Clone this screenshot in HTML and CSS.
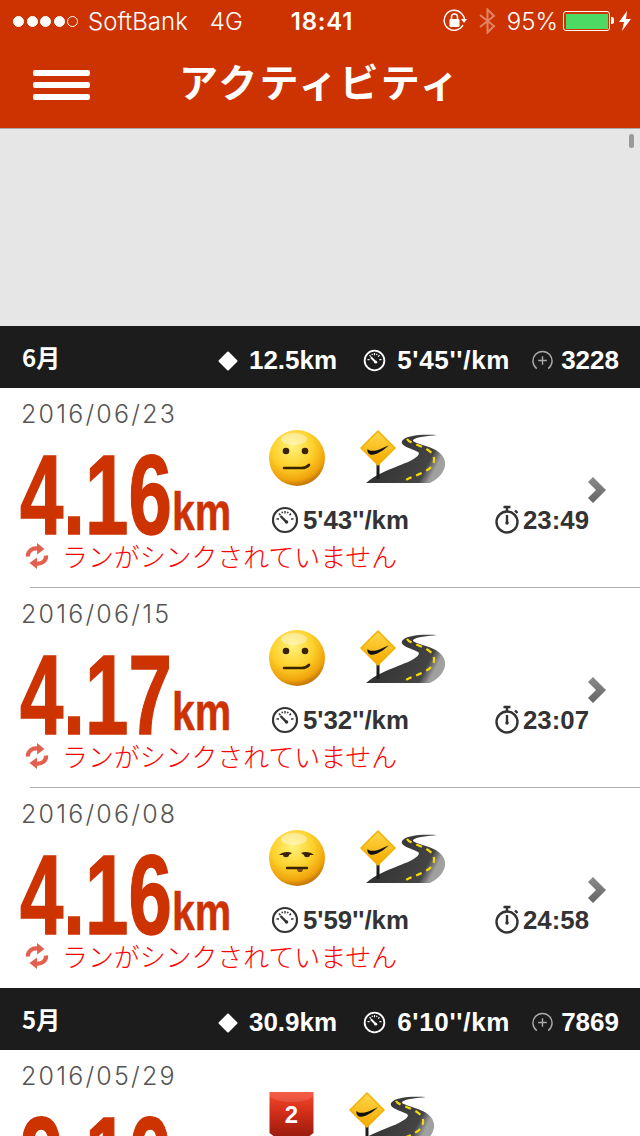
FILE: index.html
```html
<!DOCTYPE html>
<html lang="ja">
<head>
    <meta charset="UTF-8">
    <meta name="viewport" content="width=device-width, initial-scale=1.0">
    <title>アクティビティ</title>
    <link rel="stylesheet" href="styles.css">
</head>
<body>
    <!-- shared icons -->
    <svg class="defs" width="0" height="0" aria-hidden="true">
        <defs>
            <radialGradient id="faceFill" cx="42%" cy="30%" r="75%">
                <stop offset="0" stop-color="#fff27a"/>
                <stop offset="0.5" stop-color="#fcd02a"/>
                <stop offset="0.8" stop-color="#f0a30c"/>
                <stop offset="1" stop-color="#a85f04"/>
            </radialGradient>
            <linearGradient id="roadFill" x1="0" y1="0" x2="1" y2="0.3">
                <stop offset="0" stop-color="#2a2a2a"/>
                <stop offset="0.88" stop-color="#444"/>
                <stop offset="1" stop-color="#a0a0a0"/>
            </linearGradient>
            <linearGradient id="signFill" x1="0" y1="0" x2="0" y2="1">
                <stop offset="0" stop-color="#ffd84a"/>
                <stop offset="1" stop-color="#f5a800"/>
            </linearGradient>
            <linearGradient id="badgeFill" x1="0" y1="0" x2="0" y2="1">
                <stop offset="0" stop-color="#f5482c"/>
                <stop offset="0.5" stop-color="#cf2c18"/>
                <stop offset="1" stop-color="#9c1c0e"/>
            </linearGradient>
            <linearGradient id="chevFill" x1="0" y1="0" x2="0" y2="1">
                <stop offset="0" stop-color="#8a8a8a"/>
                <stop offset="1" stop-color="#666"/>
            </linearGradient>

            <symbol id="road" viewBox="0 0 90 56">
                <path d="M77 5C62 4 46 5 42 11C40 16 50 18 58 22C62 25 52 31 38 36C25 41 14 46 6 53L70 53C80 48 86 40 85 32C84 24 76 19 66 16C60 14 52 12 53 10C56 7 68 6 77 5Z" fill="url(#roadFill)"/>
                <path d="M47 9C49 13 60 15 68 20C76 25 76 33 69 39C61 44 51 47 42 52" fill="none" stroke="#f5d90a" stroke-width="2.200" stroke-dasharray="6 5"/>
                <rect x="16.500" y="32" width="3" height="17" fill="#1c1c1c"/>
                <path d="M18 1L35 18L18 35L1 18Z" fill="url(#signFill)" stroke="#f2b000" stroke-width="1.500" stroke-linejoin="round"/>
                <path d="M7.500 19C11 23 20 20 29 15C23 21 15 26 10 24.500C8 23.500 7 21.500 7.500 19Z" fill="#111"/>
            </symbol>

            <symbol id="gauge" viewBox="0 0 28 28">
                <circle cx="14" cy="14" r="12" fill="none" stroke="currentColor" stroke-width="2.200"/>
                <path d="M14 5v2.500M8 7.500l1.500 1.800M20 7.500l-1.500 1.800M5.500 13h2.500M20 13h2.500M11 5.800l.5 1.500M17 5.800l-.5 1.500" stroke="currentColor" stroke-width="1.400" fill="none"/>
                <path d="M9.500 10l5.800 5.800" stroke="currentColor" stroke-width="2.400"/>
                <circle cx="15.500" cy="16" r="1.800" fill="currentColor"/>
            </symbol>

            <symbol id="watch" viewBox="0 0 26 30">
                <circle cx="12" cy="17" r="10.500" fill="none" stroke="#333" stroke-width="2.400"/>
                <path d="M8.500 2h7M12 2v4M20 5.500l2.500 2.500" stroke="#333" stroke-width="2.400" fill="none"/>
                <path d="M12 10v8" stroke="#333" stroke-width="2.400"/>
                <circle cx="12" cy="18" r="1.800" fill="#333"/>
            </symbol>

            <symbol id="sync" viewBox="0 0 24 26">
                <path d="M3 13.500C2.500 8.500 7 4.500 13 5.500" fill="none" stroke="#e2604f" stroke-width="4.200"/>
                <path d="M12 0L19.500 6L12 11.500Z" fill="#e2604f"/>
                <path d="M21 12.500C21.500 17.500 17 21.500 11 20.500" fill="none" stroke="#e2604f" stroke-width="4.200"/>
                <path d="M12 14.500L4.500 20L12 26Z" fill="#e2604f"/>
            </symbol>

            <symbol id="chev" viewBox="0 0 18 26">
                <path d="M0 5L5 0L18 13L5 26L0 21L8 13Z" fill="url(#chevFill)"/>
            </symbol>

            <symbol id="faceFlat" viewBox="0 0 56 56">
                <circle cx="28" cy="28" r="28" fill="url(#faceFill)"/>
                <ellipse cx="25" cy="9" rx="13" ry="6" fill="#fff" opacity="0.4"/>
                <circle cx="17" cy="21" r="3.300" fill="#3a2205"/>
                <circle cx="36" cy="21" r="3.300" fill="#3a2205"/>
                <path d="M15 38H33C36 38 38 37 40 35" fill="none" stroke="#3a2205" stroke-width="2.600" stroke-linecap="round"/>
            </symbol>

            <symbol id="faceTired" viewBox="0 0 56 56">
                <circle cx="28" cy="28" r="28" fill="url(#faceFill)"/>
                <ellipse cx="25" cy="9" rx="13" ry="6" fill="#fff" opacity="0.4"/>
                <path d="M10 25C13 22 19 21 23 23L20 25C20 28 14 28 14 25Z" fill="#3a2205"/>
                <path d="M32 23C36 21 42 22 45 25L41 25C41 28 35 28 35 25Z" fill="#3a2205"/>
                <path d="M18 38H38" fill="none" stroke="#3a2205" stroke-width="2.400" stroke-linecap="round"/>
                <path d="M28 39H34C34 41.500 32.500 42 31 42C29.500 42 28 41.500 28 39Z" fill="#7a4a12"/>
            </symbol>

            <symbol id="badge" viewBox="0 0 44 44">
                <path d="M0 0H44V41L40 44H4L0 41Z" fill="url(#badgeFill)"/>
                <path d="M0 0H44V4C36 12 8 12 0 4Z" fill="#fff" opacity="0.12"/>
            </symbol>
        </defs>
    </svg>

    <header class="app-header">
        <div class="status-bar">
            <div class="status-left">
                <span class="signal">
                    <i></i><i></i><i></i><i></i><i class="off"></i>
                </span>
                <span class="carrier">SoftBank</span>
                <span class="network">4G</span>
            </div>
            <div class="status-time">18:41</div>
            <div class="status-right">
                <svg class="lock-icon" width="24" height="24" viewBox="0 0 24 24">
                    <path d="M20 16A10 10 0 1 1 18.500 4.500A10 10 0 0 1 21.500 10" fill="none" stroke="#fff" stroke-width="1.400"/>
                    <path d="M18 10H24L21 14Z" fill="#fff"/>
                    <rect x="6.500" y="10" width="10" height="8" rx="1" fill="#fff"/>
                    <path d="M8.500 10V8A3 3 0 0 1 14.500 8V10" fill="none" stroke="#fff" stroke-width="1.500"/>
                </svg>
                <svg class="bt-icon" width="17" height="26" viewBox="0 0 17 26">
                    <path d="M1 7L15 18L8.500 24.500V1.500L15 8L1 19" fill="none" stroke="#fff" stroke-opacity="0.4" stroke-width="2"/>
                </svg>
                <span class="battery-pct">95%</span>
                <span class="battery"><span class="battery-level"></span></span>
                <svg class="bolt-icon" width="12" height="20" viewBox="0 0 12 20">
                    <path d="M8 0L0 11H5L3 20L12 8H7Z" fill="#fff"/>
                </svg>
            </div>
        </div>
        <nav class="nav-bar">
            <div class="menu-btn"><span></span><span></span><span></span></div>
            <h1>アクティビティ</h1>
            <div></div>
        </nav>
    </header>

    <div class="ad-area"><div class="scroll-thumb"></div></div>

    <section class="month-bar">
        <div class="month-name">6月</div>
        <div class="month-stats">
            <div class="month-stat dist"><span class="diamond"></span>12.5km</div>
            <div class="month-stat"><svg class="gauge-sm"><use href="#gauge"/></svg><span class="pace">5'45''/km</span></div>
            <div class="month-stat tight"><svg class="plus-icon" width="21" height="22" viewBox="0 0 22 22">
                <path d="M5 19A10 10 0 1 1 17 19" fill="none" stroke="#aaa" stroke-width="1.500"/>
                <path d="M11 6v9M6.500 10.500h9" stroke="#aaa" stroke-width="1.500"/>
            </svg>3228</div>
        </div>
    </section>

    <article class="run">
        <div class="run-date">2016/06/23</div>
        <div class="run-dist"><span class="dist-num">4.16</span><span class="dist-unit">km</span></div>
        <div class="run-info">
            <div class="run-icons">
                <svg class="face"><use href="#faceFlat"/></svg>
                <svg class="road"><use href="#road"/></svg>
                <svg class="chevron"><use href="#chev"/></svg>
            </div>
            <div class="run-stats">
                <div class="run-stat"><svg class="gauge"><use href="#gauge"/></svg>5'43''/km</div>
                <div class="run-stat"><svg class="watch"><use href="#watch"/></svg>23:49</div>
            </div>
        </div>
        <div class="run-sync"><svg class="sync"><use href="#sync"/></svg>ランがシンクされていません</div>
    </article>

    <article class="run">
        <div class="run-date">2016/06/15</div>
        <div class="run-dist"><span class="dist-num">4.17</span><span class="dist-unit">km</span></div>
        <div class="run-info">
            <div class="run-icons">
                <svg class="face"><use href="#faceFlat"/></svg>
                <svg class="road"><use href="#road"/></svg>
                <svg class="chevron"><use href="#chev"/></svg>
            </div>
            <div class="run-stats">
                <div class="run-stat"><svg class="gauge"><use href="#gauge"/></svg>5'32''/km</div>
                <div class="run-stat"><svg class="watch"><use href="#watch"/></svg>23:07</div>
            </div>
        </div>
        <div class="run-sync"><svg class="sync"><use href="#sync"/></svg>ランがシンクされていません</div>
    </article>

    <article class="run last">
        <div class="run-date">2016/06/08</div>
        <div class="run-dist"><span class="dist-num">4.16</span><span class="dist-unit">km</span></div>
        <div class="run-info">
            <div class="run-icons">
                <svg class="face"><use href="#faceTired"/></svg>
                <svg class="road"><use href="#road"/></svg>
                <svg class="chevron"><use href="#chev"/></svg>
            </div>
            <div class="run-stats">
                <div class="run-stat"><svg class="gauge"><use href="#gauge"/></svg>5'59''/km</div>
                <div class="run-stat"><svg class="watch"><use href="#watch"/></svg>24:58</div>
            </div>
        </div>
        <div class="run-sync"><svg class="sync"><use href="#sync"/></svg>ランがシンクされていません</div>
    </article>

    <section class="month-bar">
        <div class="month-name">5月</div>
        <div class="month-stats">
            <div class="month-stat dist"><span class="diamond"></span>30.9km</div>
            <div class="month-stat"><svg class="gauge-sm"><use href="#gauge"/></svg><span class="pace">6'10''/km</span></div>
            <div class="month-stat tight"><svg class="plus-icon" width="21" height="22" viewBox="0 0 22 22">
                <path d="M5 19A10 10 0 1 1 17 19" fill="none" stroke="#aaa" stroke-width="1.500"/>
                <path d="M11 6v9M6.500 10.500h9" stroke="#aaa" stroke-width="1.500"/>
            </svg>7869</div>
        </div>
    </section>

    <article class="run last">
        <div class="run-date">2016/05/29</div>
        <div class="run-dist"><span class="dist-num">9.10</span><span class="dist-unit">km</span></div>
        <div class="run-info">
            <div class="run-icons">
                <div class="badge-wrap"><svg class="badge"><use href="#badge"/></svg><span class="badge-num">2</span></div>
                <svg class="road"><use href="#road"/></svg>
            </div>
        </div>
    </article>
</body>
</html>
```

FILE: styles.css
```css
:root {
    --brand: #cc3300;
    --dark: #1c1c1c;
    --text: #333333;
    --date: #555555;
    --sync: #ff0000;
}

html, body {
    margin: 0;
    padding: 0;
}

body {
    width: 640px;
    height: 1136px;
    overflow: hidden;
    background: #fff;
    font-family: "Liberation Sans", "Noto Sans CJK JP", sans-serif;
    color: var(--text);
}

.defs {
    position: absolute;
}

/* header */
.app-header {
    height: 128px;
    background: var(--brand);
    color: #fff;
}

.status-bar {
    height: 42px;
    display: grid;
    grid-template-columns: 1fr auto 1fr;
    align-items: center;
    padding: 0 9px 0 13px;
    font-family: Inter, "Liberation Sans", sans-serif;
    font-size: 24px;
    font-weight: 300;
}

.status-left {
    display: flex;
    align-items: center;
}

.signal {
    display: flex;
    gap: 2.500px;
    margin-right: 10px;
}

.signal i {
    width: 9px;
    height: 9px;
    border: 1px solid #fff;
    border-radius: 50%;
    background: #fff;
}

.signal i.off {
    background: none;
}

.network {
    margin-left: 22px;
}

.status-time {
    font-weight: 600;
    letter-spacing: 0.800px;
}

.status-right {
    display: flex;
    align-items: center;
    justify-content: flex-end;
}

.bt-icon {
    margin-left: 12px;
}

.battery-pct {
    margin-left: 11px;
}

.battery {
    width: 42px;
    height: 15px;
    margin-left: 5px;
    padding: 1.500px;
    border: 1px solid #fff;
    border-radius: 3px;
    position: relative;
}

.battery::after {
    content: "";
    position: absolute;
    right: -5px;
    top: 5px;
    width: 3px;
    height: 7px;
    background: #fff;
    border-radius: 0 2px 2px 0;
}

.battery-level {
    display: block;
    height: 100%;
    background: #4cd964;
}

.bolt-icon {
    margin-left: 9px;
}

.nav-bar {
    height: 86px;
    display: grid;
    grid-template-columns: 1fr auto 1fr;
    align-items: center;
}

.nav-bar h1 {
    margin: 0 0 10px;
    font-size: 39px;
    letter-spacing: 2.200px;
    font-weight: 700;
    line-height: 1;
    font-family: "Noto Sans CJK JP", sans-serif;
}

.menu-btn {
    width: 57px;
    margin-left: 33px;
    display: flex;
    flex-direction: column;
    gap: 6px;
}

.menu-btn span {
    height: 6px;
    background: #fff;
    border-radius: 2px;
}

/* empty banner */
.ad-area {
    height: 197px;
    background: #e6e6e6;
    border-top: 1px solid #a8a8a8;
    position: relative;
}

.scroll-thumb {
    position: absolute;
    top: 5px;
    left: 629px;
    width: 5px;
    height: 14px;
    border-radius: 3px;
    background: #999;
}

/* month summary */
.month-bar {
    height: 62px;
    background: var(--dark);
    color: #fff;
    display: flex;
    align-items: center;
    justify-content: space-between;
    padding: 0 21px 0 22px;
    font-weight: bold;
    font-size: 26px;
}

.month-name {
    font-family: "Noto Sans CJK JP", sans-serif;
    font-size: 24px;
    margin-top: -2px;
}

.month-stats {
    display: flex;
    align-items: center;
    gap: 22px;
    padding-top: 7px;
}

.month-stat {
    display: flex;
    align-items: center;
    gap: 12px;
}

.month-stat.dist {
    margin-right: 4px;
}

.month-stat.tight {
    gap: 8px;
}

.diamond {
    width: 14px;
    height: 14px;
    margin: 0 2px 0 3px;
    background: #fff;
    transform: rotate(45deg);
    border-radius: 1px;
}

.gauge-sm {
    width: 23px;
    height: 23px;
    color: #fff;
}

.month-stat .pace {
    letter-spacing: 0.700px;
    margin-left: -1px;
}

/* run rows */
.run {
    height: 200px;
    box-sizing: border-box;
    position: relative;
    display: grid;
    grid-template-columns: 249px 1fr;
    grid-template-rows: 41px 112px 33px;
    padding-left: 20px;
}

.run::after {
    content: "";
    position: absolute;
    left: 30px;
    right: 0;
    bottom: 0;
    height: 1px;
    background: #b0b0b0;
}

.run.last::after {
    display: none;
}

.run-date {
    grid-column: 1 / 3;
    padding-left: 1px;
    font-family: Inter, "Liberation Sans", sans-serif;
    font-size: 25px;
    font-weight: 300;
    line-height: 52px;
    height: 41px;
    letter-spacing: 2.200px;
    color: var(--date);
}

.run-dist {
    display: flex;
    align-items: flex-end;
    color: var(--brand);
    font-weight: bold;
    line-height: 1;
    white-space: nowrap;
}

.dist-num {
    display: inline-block;
    width: 152px;
    height: 105px;
    line-height: 105px;
    font-size: 113px;
    margin-bottom: -7px;
    transform: scaleX(0.69);
    transform-origin: left center;
    -webkit-text-stroke: 1.500px var(--brand);
}

.dist-unit {
    display: inline-block;
    height: 62px;
    line-height: 62px;
    font-size: 54px;
    transform: scaleX(0.76);
    transform-origin: left center;
    margin-bottom: -1px;
    -webkit-text-stroke: 0.500px var(--brand);
}

.run-info {
    display: flex;
    flex-direction: column;
}

.run-icons {
    height: 74px;
    display: flex;
    align-items: flex-start;
    gap: 35px;
    padding-right: 34px;
}

.face {
    width: 56px;
    height: 56px;
    margin-top: 1px;
}

.road {
    width: 90px;
    height: 56px;
    margin-top: 1px;
}

.chevron {
    width: 18px;
    height: 26px;
    align-self: flex-end;
    margin-left: auto;
}

.badge-wrap {
    width: 45px;
    height: 44px;
    margin-top: 1px;
    position: relative;
}

.badge {
    width: 45px;
    height: 44px;
    display: block;
}

.badge-num {
    position: absolute;
    inset: 0;
    text-align: center;
    line-height: 46px;
    color: #fff;
    font-weight: bold;
    font-size: 24px;
}

.run-stats {
    height: 34px;
    display: flex;
    align-items: center;
    justify-content: space-between;
    padding: 0 51px 0 2px;
    font-size: 25.800px;
    font-weight: bold;
}

.run-stat {
    display: flex;
    align-items: center;
    gap: 2px;
}

.gauge {
    width: 28px;
    height: 28px;
    margin-right: 2px;
    color: var(--text);
}

.watch {
    width: 26px;
    height: 30px;
}

.run-sync {
    grid-column: 1 / 3;
    display: flex;
    align-items: center;
    gap: 13px;
    padding: 0 0 4px 5px;
    font-family: "Noto Sans CJK JP", sans-serif;
    font-size: 25.900px;
    font-weight: 300;
    color: var(--sync);
    white-space: nowrap;
}

.sync {
    width: 24px;
    height: 26px;
}
```
